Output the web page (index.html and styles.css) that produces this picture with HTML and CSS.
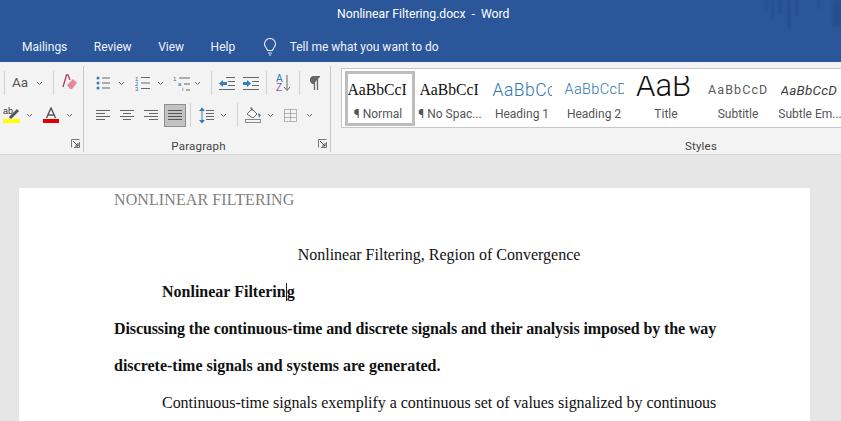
FILE: index.html
```html
<!DOCTYPE html>
<html lang="en">
<head>
<meta charset="utf-8">
<title>Nonlinear Filtering.docx - Word</title>
<link rel="stylesheet" href="styles.css">
</head>
<body>
<svg class="defs" width="0" height="0" aria-hidden="true">
  <symbol id="chev" viewBox="0 0 7 5"><path d="M1 1l2.5 2.5L6 1" fill="none" stroke="#666" stroke-width="1"/></symbol>
  <symbol id="launch" viewBox="0 0 9 9"><path d="M.5 8.5v-8h8M8.5 3v5.500H3" fill="none" stroke="#777"/><path d="M2 2l5 5M7 4v3H4" fill="none" stroke="#444"/></symbol>
</svg>
<header class="blue">
  <div class="titlebar">Nonlinear Filtering.docx&nbsp; -&nbsp; Word</div>
  <nav class="tabs">
    <span class="tab t1">Mailings</span>
    <span class="tab">Review</span>
    <span class="tab">View</span>
    <span class="tab">Help</span>
    <svg class="bulb" width="14" height="18" viewBox="0 0 14 18"><path d="M4.500 12.500C4 10 1.500 9 1.500 6a5.500 5.500 0 0 1 11 0c0 3-2.500 4-3 6.500zM5 15h4M6 17h2" fill="none" stroke="#e8eef7" stroke-width="1.100"/></svg>
    <span class="tell">Tell me what you want to do</span>
  </nav>
  <svg class="deco" width="90" height="34" viewBox="0 0 90 34" aria-hidden="true">
    <g fill="#244a85" opacity=".6">
      <rect x="14" y="0" width="3" height="13"/><rect x="20" y="0" width="3" height="18"/><rect x="27" y="0" width="4" height="14"/><rect x="36" y="0" width="4" height="29"/><rect x="44" y="0" width="3" height="16"/><rect x="66" y="0" width="3" height="9"/><rect x="81" y="0" width="9" height="27"/>
    </g>
  </svg>
</header>
<section class="ribbon">
  <div class="group g-font">
    <div class="rows">
      <div class="row r-font1">
        <i class="sep"></i>
        <span class="aa">Aa</span>
        <svg class="ch c1" width="7" height="5"><use href="#chev"/></svg>
        <i class="sep s2"></i>
        <svg class="ic eraser" width="16" height="18" viewBox="0 0 16 18"><path d="M1 13L4.500 1h1.500L8 6" fill="none" stroke="#b0405a" stroke-width="1.300"/><path d="M5 11l6-6 4 4-5 6H8z" fill="#e58a9c"/></svg>
      </div>
      <div class="row r-font2">
        <svg class="ic high" width="17" height="16" viewBox="0 0 17 16"><text x="0" y="7" class="svgt">ab</text><path d="M7 11l8-8" stroke="#555" stroke-width="3"/><rect y="12" width="17" height="4" fill="#ffff00"/></svg>
        <svg class="ch c2" width="7" height="5"><use href="#chev"/></svg>
        <svg class="ic fcolor" width="16" height="16" viewBox="0 0 16 16"><path d="M3.500 11L8 1l4.500 10M5 8h6" fill="none" stroke="#555" stroke-width="1.400"/><rect y="12" width="16" height="4" fill="#e00000"/></svg>
        <svg class="ch c3" width="7" height="5"><use href="#chev"/></svg>
      </div>
    </div>
    <div class="grouplabel"><svg class="launch" width="9" height="9"><use href="#launch"/></svg></div>
  </div>
  <div class="group g-para">
    <div class="rows">
      <div class="row r-para1">
        <svg class="ic" width="14" height="14" viewBox="0 0 14 14"><g fill="#3b78b5"><circle cx="2" cy="2" r="1.500"/><circle cx="2" cy="7" r="1.500"/><circle cx="2" cy="12" r="1.500"/></g><path d="M6 2h8M6 7h8M6 12h8" stroke="#666"/></svg>
        <svg class="ch m8" width="7" height="5"><use href="#chev"/></svg>
        <svg class="ic m10" width="15" height="16" viewBox="0 0 15 16"><text x="0" y="5.500" class="svgn">1</text><text x="0" y="10.500" class="svgn">2</text><text x="0" y="15.500" class="svgn">3</text><path d="M6 2.500h9M6 8h9M6 13.500h9" stroke="#666"/></svg>
        <svg class="ch m7" width="7" height="5"><use href="#chev"/></svg>
        <svg class="ic m9" width="17" height="15" viewBox="0 0 17 15"><text x="0" y="5" class="svgn">1</text><text x="5" y="10" class="svgn">a</text><text x="9" y="15" class="svgn">i</text><path d="M6 2h11M11 8h6M13 14h4" stroke="#666"/></svg>
        <svg class="ch m4" width="7" height="5"><use href="#chev"/></svg>
        <i class="sep s-a"></i>
        <svg class="ic m7" width="16" height="13" viewBox="0 0 16 13"><path d="M7 .5h9M9 4.500h7M9 8.500h7M0 12.500h16" stroke="#666"/><path d="M0 6.500L4 3v2h4v3H4v2z" fill="#2f7fc0"/></svg>
        <svg class="ic m8" width="16" height="13" viewBox="0 0 16 13"><path d="M0 .5h16M0 12.500h16M9 4.500h7M9 8.500h7" stroke="#666"/><path d="M8 6.500L4 3v2H0v3h4v2z" fill="#2f7fc0"/></svg>
        <i class="sep s-b"></i>
        <svg class="ic m9" width="14" height="18" viewBox="0 0 14 18"><text x="0" y="8" class="svgs az1">A</text><text x="0" y="17" class="svgs az2">Z</text><path d="M11 1v15M8 13l3 3.500 3-3.500" fill="none" stroke="#666"/></svg>
        <i class="sep s-c"></i>
        <svg class="ic m9" width="11" height="14" viewBox="0 0 11 14"><path d="M5 7.500a3.500 3.500 0 0 1 0-7h6M5.500 1v13M8.500 1v13" fill="#666" stroke="#666" stroke-width="1.300"/></svg>
      </div>
      <div class="row r-para2">
        <svg class="ic" width="14" height="11" viewBox="0 0 14 11"><path d="M0 .5h14M0 3.500h9M0 6.500h14M0 9.500h9" stroke="#666"/></svg>
        <svg class="ic m10" width="14" height="11" viewBox="0 0 14 11"><path d="M0 .5h14M3 3.500h8M0 6.500h14M3 9.500h8" stroke="#666"/></svg>
        <svg class="ic m10" width="14" height="11" viewBox="0 0 14 11"><path d="M0 .5h14M5 3.500h9M0 6.500h14M5 9.500h9" stroke="#666"/></svg>
        <span class="justify"><svg width="14" height="11" viewBox="0 0 14 11"><path d="M0 .5h14M0 3.500h14M0 6.500h14M0 9.500h14" stroke="#555"/></svg></span>
        <i class="sep s-d"></i>
        <svg class="ic m8" width="15" height="17" viewBox="0 0 15 17"><path d="M3 1v15" stroke="#2f7fc0"/><path d="M0 4l3-3.500L6 4zM0 13l3 3.500L6 13z" fill="#2f7fc0"/><path d="M7 3.500h8M7 6.500h8M7 9.500h8M7 12.500h8" stroke="#666"/></svg>
        <svg class="ch m6" width="7" height="5"><use href="#chev"/></svg>
        <i class="sep s-e"></i>
        <svg class="ic m7" width="16" height="16" viewBox="0 0 16 16"><path d="M2 7l5-5 5 5-4 4z" fill="#fff" stroke="#666"/><path d="M5 1h2v3" fill="none" stroke="#666"/><path d="M13 6l3 2-2 3z" fill="#2f7fc0"/><rect x=".5" y="12.500" width="15" height="3" fill="none" stroke="#888"/></svg>
        <svg class="ch m6" width="7" height="5"><use href="#chev"/></svg>
        <svg class="ic m10" width="13" height="13" viewBox="0 0 13 13"><path d="M.5 .5h12v12H.5zM.5 4.500h12M.5 8.500h12M6.500 .5v12" fill="none" stroke="#777" stroke-dasharray="1 1"/></svg>
        <svg class="ch m9" width="7" height="5"><use href="#chev"/></svg>
      </div>
    </div>
    <div class="grouplabel paralabel">Paragraph<svg class="launch" width="9" height="9"><use href="#launch"/></svg></div>
  </div>
  <div class="group g-styles">
    <div class="gallery">
      <div class="style selected"><span class="pv serif">AaBbCcI</span><span class="lb">¶ Normal</span></div>
      <div class="style"><span class="pv serif">AaBbCcI</span><span class="lb">¶ No Spac...</span></div>
      <div class="style"><span class="pv h1">AaBbCc</span><span class="lb">Heading 1</span></div>
      <div class="style"><span class="pv h2">AaBbCcD</span><span class="lb">Heading 2</span></div>
      <div class="style"><span class="pv titlep">AaB</span><span class="lb">Title</span></div>
      <div class="style"><span class="pv sub">AaBbCcD</span><span class="lb">Subtitle</span></div>
      <div class="style"><span class="pv subem">AaBbCcD</span><span class="lb">Subtle Em...</span></div>
    </div>
    <div class="grouplabel styleslabel">Styles</div>
  </div>
</section>
<main class="canvas">
  <article class="page">
    <div class="pagehead">NONLINEAR FILTERING</div>
    <p class="center">Nonlinear Filtering, Region of Convergence</p>
    <p class="indent"><b>Nonlinear Filterin<span class="caret"></span>g</b></p>
    <p class="boldp"><b><span class="tight">Discussing the continuous-time and discrete signals and their analysis imposed by the way</span> discrete-time signals and systems are generated.</b></p>
    <p class="indent body">Continuous-time signals exemplify a continuous set of values signalized by continuous</p>
  </article>
</main>
</body>
</html>
```
FILE: styles.css
```css
* { box-sizing: border-box; }
html, body { margin: 0; height: 421px; overflow: hidden; }
body { width: 841px; background: #e6e6e6; font-family: Roboto, "Open Sans", sans-serif; }
.defs { position: absolute; }

.blue { position: relative; height: 62px; background: #2b579a; color: #fff; overflow: hidden; }
.titlebar { height: 29px; padding: 6px 0 0 337px; font-size: 12.200px; line-height: 17px; white-space: nowrap; }
.tabs { display: flex; align-items: center; height: 33px; padding-top: 3px; font-size: 12px; color: #f0f4fa; }
.tab { margin-left: 26.500px; }
.tab.t1 { margin-left: 22px; }
.bulb { margin-left: 28px; }
.tell { margin-left: 12.500px; }
.deco { position: absolute; top: 0; right: 0; filter: blur(1px); }

.ribbon { display: flex; height: 93px; background: #f3f3f3; border-bottom: 1px solid #d6d6d6; }
.group { position: relative; display: flex; flex-direction: column; height: 86px; margin-top: 4px; }
.g-font { width: 84px; border-right: 1px solid #c8c8c8; }
.g-para { width: 247px; border-right: 1px solid #c8c8c8; }
.g-styles { flex: 1; overflow: hidden; }
.rows { height: 70px; }
.row { display: flex; align-items: center; height: 32px; }
.row svg { flex: none; }
.sep { display: block; flex: none; width: 1px; height: 24px; background: #d2d2d2; }
.grouplabel { position: relative; font-size: 11.500px; line-height: 15px; color: #444; text-align: center; letter-spacing: .2px; padding-top: 3px; height: 16px; }
.paralabel { padding-right: 17px; }
.styleslabel { padding-left: 230px; }
.launch { position: absolute; right: 3px; top: 3px; }

.r-font1 { padding-left: 4px; margin-top: 1px; }
.aa { margin-left: 7px; font-size: 13.500px; color: #555; line-height: 1; }
.c1 { margin-left: 8px; }
.s2 { margin-left: 10px; }
.eraser { margin-left: 8px; }
.r-font2 { padding-left: 3px; }
.c2 { margin-left: 6px; }
.fcolor { margin-left: 10px; }
.c3 { margin-left: 7px; }
.svgt { font: 9px "Liberation Sans", sans-serif; fill: #333; }

.r-para1 { padding-left: 12px; margin-top: 1px; }
.r-para2 { padding-left: 12px; }
.m4 { margin-left: 4px; } .m6 { margin-left: 6px; } .m7 { margin-left: 7px; } .m8 { margin-left: 8px; } .m9 { margin-left: 9px; } .m10 { margin-left: 10px; }
.s-a { margin-left: 10px; } .s-b { margin-left: 7px; } .s-c { margin-left: 9px; }
.s-d { margin-left: 4px; } .s-e { margin-left: 10px; }
.svgn { font: 6px "Liberation Sans", sans-serif; fill: #2c6ca5; }
.svgs { font: 10px "Liberation Sans", sans-serif; }
.az1 { fill: #2f7fc0; } .az2 { fill: #8a5aa8; }
.justify { display: flex; align-items: center; justify-content: center; flex: none; width: 22px; height: 23px; margin-left: 6px; background: #c2c2c2; border: 1px solid #8e8e8e; }

.gallery { display: flex; height: 60px; margin: 2px 0 8px 10px; padding: 2px 0 0 1px; background: #fff; border: 1px solid #c6c6c6; border-right: 0; }
.style { display: flex; flex: none; flex-direction: column; align-items: center; width: 72px; height: 55px; overflow: hidden; padding-top: 5px; }
.style.selected { width: 70px; margin: 0 -1px 0 2px; border: 3px solid #bdbdbd; padding: 2px 4px 0 0; }
.pv { display: block; flex: none; width: 61px; height: 28px; overflow: hidden; white-space: nowrap; line-height: 28px; color: #111; text-align: left; }
.serif { font: 15.700px/28px "Liberation Serif", serif; }
.h1 { font: 300 17.500px/28px Roboto, sans-serif; color: #2f75b5; letter-spacing: .5px; width: 59px; }
.h2 { font: 300 14.500px/28px Roboto, sans-serif; color: #2f75b5; letter-spacing: .35px; width: 59px; }
.titlep { font: 300 31px/20px Roboto, sans-serif; width: 60px; }
.sub { font: 12.500px/28px Roboto, sans-serif; color: #5a5a5a; letter-spacing: 1.100px; width: 60px; }
.subem { font: italic 13.500px/28px Roboto, sans-serif; color: #404040; letter-spacing: .2px; width: 59px; }
.lb { font-size: 12px; line-height: 16px; color: #555; white-space: nowrap; margin-top: 2px; }

.canvas { padding: 33px 0 0 19px; }
.page { width: 791px; height: 300px; padding: 3px 0 0 95px; background: #fff; font: 16px/37px "Liberation Serif", serif; color: #111; }
.pagehead { height: 45px; line-height: 18px; color: #7f7f7f; letter-spacing: .1px; }
.page p { width: 602px; margin: 0; }
.page .boldp { width: 610px; }
.tight { letter-spacing: -.11px; }
.page .body { width: 612px; letter-spacing: -.035px; }
.center { text-indent: 48px; text-align: center; }
.indent { text-indent: 48px; }
.caret { display: inline-block; width: 0; height: 18px; margin-bottom: -4px; border-left: 1px solid #222; }
```
